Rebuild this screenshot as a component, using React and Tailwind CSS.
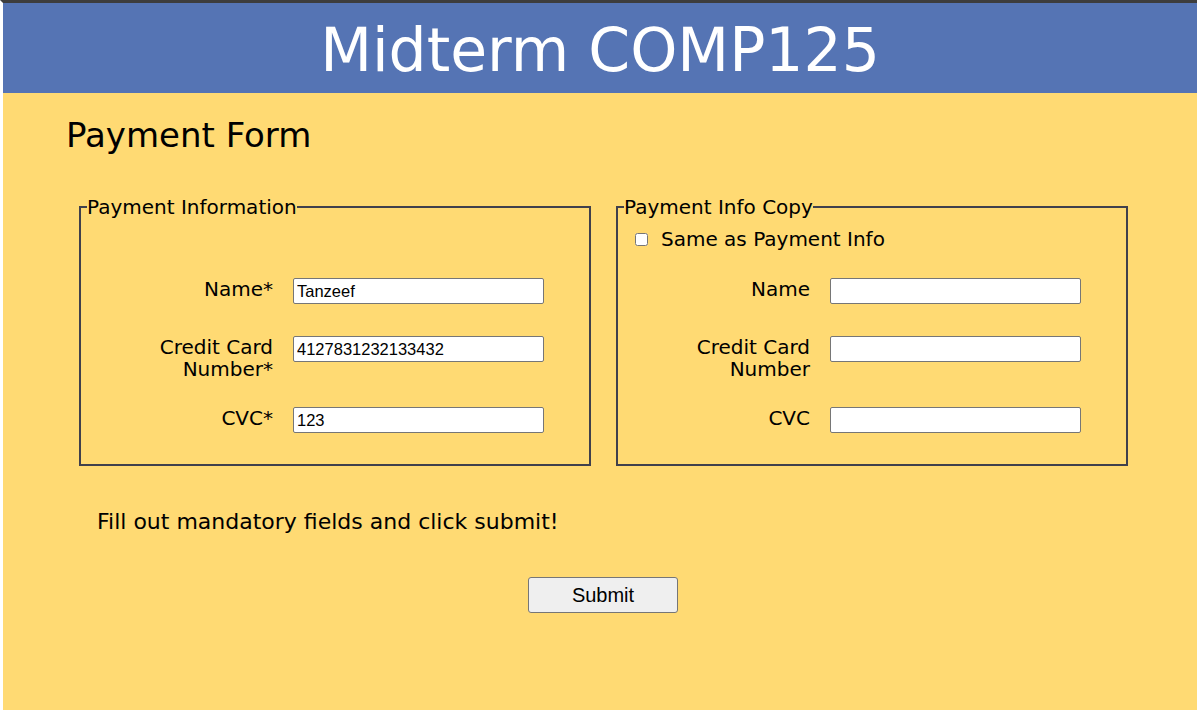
export default function App() {
  const leftRows = [
    { label: ['Name*'], value: 'Tanzeef' },
    { label: ['Credit Card', 'Number*'], value: '4127831232133432' },
    { label: ['CVC*'], value: '123' },
  ];
  const rightRows = [
    { label: ['Name'], value: '' },
    { label: ['Credit Card', 'Number'], value: '' },
    { label: ['CVC'], value: '' },
  ];

  return (
    <div className="min-h-[710px] flex flex-col border-t-[3px] border-[#3d3d3d] border-l-[3px] border-l-white bg-[#ffda73] font-['DejaVu_Sans',sans-serif] text-black">
      <header className="h-[90px] bg-[#5574b4] flex items-center justify-center">
        <h1 className="text-[60px] leading-none text-white pt-[4px]">Midterm COMP125</h1>
      </header>

      <main className="flex-1 pl-[63px]">
        <h2 className="text-[34px] leading-none mt-[25px]">Payment Form</h2>

        <div className="flex gap-[25px] mt-[43px] ml-[13px]">
          <PaymentFieldset legend="Payment Information" rows={leftRows} />
          <PaymentFieldset legend="Payment Info Copy" rows={rightRows} checkbox />
        </div>

        <p className="text-[22px] leading-none mt-[45px] ml-[31px]">Fill out mandatory fields and click submit!</p>

        <div className="flex justify-center mt-[44px] pr-[57px]">
          <button
            type="button"
            className="w-[150px] h-[36px] bg-[#efefef] border border-[#767676] rounded-[3px] font-['Liberation_Sans',sans-serif] text-[20px]"
          >
            Submit
          </button>
        </div>
      </main>
    </div>
  );
}

function PaymentFieldset({ legend, rows, checkbox }) {
  const gaps = ['mt-0', 'mt-[32px]', 'mt-[27px]'];
  return (
    <fieldset className="w-[512px] border-2 border-[#40404c] px-[6px] pb-[31px]">
      <legend className="text-[20px] leading-[24px]">{legend}</legend>
      <div className="h-[34px] flex items-center pt-[6px]">
        {checkbox && (
          <label className="flex items-center text-[20px] leading-[24px] ml-[11px]">
            <input type="checkbox" className="w-[13px] h-[13px] mr-[13px]" />
            Same as Payment Info
          </label>
        )}
      </div>
      <div className="flex flex-col mt-[25px]">
        {rows.map((row, i) => (
          <div key={i} className={`flex items-start ${gaps[i]}`}>
            <div className="w-[186px] text-right text-[20px] leading-[22px]">
              {row.label.map((line) => (
                <div key={line}>{line}</div>
              ))}
            </div>
            <input
              type="text"
              defaultValue={row.value}
              className="ml-[20px] w-[251px] h-[26px] bg-white border border-[#767676] rounded-[2px] px-[3px] font-['Liberation_Sans',sans-serif] text-[16.5px]"
            />
          </div>
        ))}
      </div>
    </fieldset>
  );
}
